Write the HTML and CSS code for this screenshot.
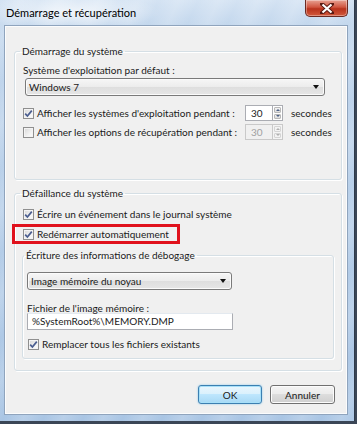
FILE: index.html
```html
<!DOCTYPE html>
<html lang="fr">
<head>
    <meta charset="UTF-8">
    <title>Démarrage et récupération</title>
    <link rel="stylesheet" href="styles.css">
</head>
<body>
    <div class="window">
        <div class="titlebar">
            <span class="title">Démarrage et récupération</span>
            <span class="close">
                <svg width="14" height="11" viewBox="0 0 14 11">
                    <path d="M2 1 L12 10 M12 1 L2 10" stroke="#5a1a12" stroke-width="4" stroke-linecap="square"/>
                    <path d="M2.5 1.5 L11.5 9.5 M11.5 1.5 L2.5 9.5" stroke="#fff" stroke-width="2.2"/>
                </svg>
            </span>
        </div>

        <div class="client">
            <fieldset class="group group-startup">
                <legend>Démarrage du système</legend>
                <div class="label">Système d'exploitation par défaut :</div>
                <div class="combo combo-os">
                    <span>Windows 7</span>
                    <i class="arrow"></i>
                </div>
                <div class="row row-first">
                    <span class="check">
                        <svg width="9" height="9" viewBox="0 0 9 9"><path d="M1.2 4.6 L3.4 7 L7.8 1.6" fill="none" stroke="#4a5d8f" stroke-width="1.7"/></svg>
                    </span>
                    <span class="row-text">Afficher les systèmes d'exploitation pendant :</span>
                    <div class="spin">
                        <span class="spin-value">30</span>
                        <span class="spin-btns"><i class="up"></i><i class="down"></i></span>
                    </div>
                    <span class="unit">secondes</span>
                </div>
                <div class="row">
                    <span class="check"></span>
                    <span class="row-text">Afficher les options de récupération pendant :</span>
                    <div class="spin spin-disabled">
                        <span class="spin-value">30</span>
                        <span class="spin-btns"><i class="up"></i><i class="down"></i></span>
                    </div>
                    <span class="unit">secondes</span>
                </div>
            </fieldset>

            <fieldset class="group group-failure">
                <legend>Défaillance du système</legend>
                <div class="row">
                    <span class="check">
                        <svg width="9" height="9" viewBox="0 0 9 9"><path d="M1.2 4.6 L3.4 7 L7.8 1.6" fill="none" stroke="#4a5d8f" stroke-width="1.7"/></svg>
                    </span>
                    <span>Écrire un événement dans le journal système</span>
                </div>
                <div class="row row-restart">
                    <div class="highlight">
                        <span class="check">
                            <svg width="9" height="9" viewBox="0 0 9 9"><path d="M1.2 4.6 L3.4 7 L7.8 1.6" fill="none" stroke="#4a5d8f" stroke-width="1.7"/></svg>
                        </span>
                        <span>Redémarrer automatiquement</span>
                    </div>
                </div>

                <fieldset class="group group-debug">
                    <legend>Écriture des informations de débogage</legend>
                    <div class="combo combo-dump">
                        <span>Image mémoire du noyau</span>
                        <i class="arrow"></i>
                    </div>
                    <div class="label label-file">Fichier de l'image mémoire :</div>
                    <div class="textbox">%SystemRoot%\MEMORY.DMP</div>
                    <div class="row row-replace">
                        <span class="check">
                            <svg width="9" height="9" viewBox="0 0 9 9"><path d="M1.2 4.6 L3.4 7 L7.8 1.6" fill="none" stroke="#4a5d8f" stroke-width="1.7"/></svg>
                        </span>
                        <span>Remplacer tous les fichiers existants</span>
                    </div>
                </fieldset>
            </fieldset>

            <div class="actions">
                <button class="btn btn-default">OK</button>
                <button class="btn">Annuler</button>
            </div>
        </div>
    </div>
</body>
</html>
```

FILE: styles.css
```css
body {
    margin: 0;
    width: 357px;
    height: 424px;
    overflow: hidden;
    background: #3b4656;
    font-family: 'Lato', sans-serif;
    font-size: 10px;
    color: #1a1a1a;
    white-space: nowrap;
}

.window {
    width: 355px;
    height: 421px;
    box-sizing: border-box;
    padding: 0 6px 0 4px;
    background:
        radial-gradient(ellipse 90px 18px at 70px 12px, rgba(255, 255, 255, 0.7), rgba(255, 255, 255, 0)),
        repeating-linear-gradient(115deg, rgba(255, 255, 255, 0) 0, rgba(255, 255, 255, 0.18) 18px, rgba(255, 255, 255, 0) 36px),
        linear-gradient(180deg, #d4e3f3 0, #c3d7ed 25px, #a9c5e4 100%);
    border-right: 1px solid #2e3a4a;
}

.titlebar {
    height: 25px;
    display: flex;
    justify-content: space-between;
    align-items: flex-start;
}

.title {
    margin: 5px 0 0 2px;
    font-size: 11px;
    line-height: 16px;
    color: #000;
}

.close {
    width: 43px;
    height: 17px;
    box-sizing: border-box;
    display: flex;
    justify-content: center;
    align-items: center;
    border: 1px solid #6b2a22;
    border-top: none;
    border-radius: 0 0 5px 5px;
    background: linear-gradient(180deg, #e8a293 0, #d0553f 45%, #b8321c 55%, #d25a3c 100%);
    box-shadow: inset 0 0 0 1px rgba(255, 255, 255, 0.35);
}

.client {
    height: 390px;
    box-sizing: border-box;
    border: 1px solid #8fa4bd;
    box-shadow: inset 0 0 0 1px #fbfcfd;
    background: #f0f0f0;
    padding: 0 5px 0 9px;
    display: flex;
    flex-direction: column;
}

/* group boxes */

.group {
    margin: 0;
    border: 1px solid #d5dfe5;
    border-radius: 3px;
    box-shadow: inset 1px 1px 0 #fff, 1px 1px 0 #fff;
    padding: 0 0 0 8px;
    min-width: 0;
}

.group legend {
    padding: 0 2px;
    margin-left: -3px;
    line-height: 15px;
}

.group-startup {
    margin-top: 18px;
    height: 136px;
    box-sizing: border-box;
    padding-top: 4px;
}

.group-failure {
    margin-top: 6px;
    height: 185px;
    box-sizing: border-box;
    padding-top: 5px;
    padding-right: 7px;
}

.group-debug {
    margin: 6px 0 0 -1px;
    height: 111px;
    box-sizing: border-box;
    padding: 9px 0 0 4px;
}

.label {
    line-height: 15px;
}

.label-file {
    margin-top: 12px;
    line-height: 12px;
}

/* combo boxes */

.combo {
    box-sizing: border-box;
    height: 18px;
    display: flex;
    align-items: center;
    justify-content: space-between;
    padding: 0 5px 0 3px;
    border: 1px solid #7a7a7a;
    border-radius: 3px;
    background: linear-gradient(180deg, #f6f6f6 0, #ececec 50%, #dedede 51%, #e6e6e6 100%);
    box-shadow: inset 0 0 0 1px #fbfbfb;
}

.combo-os {
    width: 300px;
    margin-left: 2px;
}

.combo-dump {
    width: 205px;
}

.arrow {
    width: 0;
    height: 0;
    border-left: 3.5px solid transparent;
    border-right: 3.5px solid transparent;
    border-top: 4px solid #111;
}

/* checkbox rows */

.row {
    display: flex;
    align-items: center;
    height: 16px;
}

.row-first {
    margin-top: 9px;
}

.row + .row {
    margin-top: 3px;
}

.group-failure .row + .row {
    margin-top: 4px;
}

.check {
    flex: none;
    width: 11px;
    height: 11px;
    box-sizing: border-box;
    margin-right: 3px;
    display: flex;
    align-items: center;
    justify-content: center;
    border: 1px solid #8f8f8f;
    background: linear-gradient(135deg, #d6d6d6 0, #f2f2f2 60%, #fdfdfd 100%);
    box-shadow: inset 0 0 0 1px #f4f4f4;
}

.row-text {
    width: 207px;
}

.highlight {
    display: flex;
    align-items: center;
    margin: -4px 0 -4px -11px;
    padding: 1px 8px;
    border: 3px solid #e0111c;
}

/* spin boxes */

.spin {
    display: flex;
    height: 16px;
    margin-left: 1px;
}

.spin-value {
    width: 27px;
    box-sizing: border-box;
    padding-left: 5px;
    line-height: 14px;
    border: 1px solid #abadb3;
    border-right: none;
    background: #fff;
}

.spin-btns {
    width: 11px;
    display: flex;
    flex-direction: column;
    border: 1px solid #abadb3;
    box-sizing: border-box;
    background: #fff;
}

.spin-btns i {
    flex: 1;
    display: flex;
    align-items: center;
    justify-content: center;
    margin: 1px;
    background: linear-gradient(180deg, #f3f3f3, #dcdcdc);
    border: 1px solid #b8b8b8;
    border-radius: 1px;
}

.spin-btns i + i {
    margin-top: 0;
}

.spin-btns .up::after,
.spin-btns .down::after {
    content: "";
    border-left: 2px solid transparent;
    border-right: 2px solid transparent;
}

.spin-btns .up::after {
    border-bottom: 2px solid #4d6185;
}

.spin-btns .down::after {
    border-top: 2px solid #4d6185;
}

.spin-disabled .spin-value {
    color: #a0a0a0;
    border-color: #c9c9c9;
    background: #f0f0f0;
}

.spin-disabled .spin-btns {
    border-color: #c9c9c9;
    background: #f4f4f4;
}

.spin-disabled .spin-btns i {
    border-color: #d4d4d4;
    background: #f3f3f3;
}

.spin-disabled .up::after {
    border-bottom-color: #b0b0b0;
}

.spin-disabled .down::after {
    border-top-color: #b0b0b0;
}

.unit {
    margin-left: 8px;
}

/* text box */

.textbox {
    width: 206px;
    height: 17px;
    box-sizing: border-box;
    margin-top: -1px;
    padding-left: 4px;
    line-height: 15px;
    border: 1px solid #abadb3;
    border-top-color: #e3e9ef;
    background: #fff;
}

.row-replace {
    margin-top: 6px;
    padding-left: 1px;
}

/* buttons */

.actions {
    display: flex;
    justify-content: flex-end;
    gap: 8px;
    margin-top: 14px;
    padding-right: 7px;
}

.btn {
    width: 65px;
    height: 19px;
    padding: 0;
    font-family: 'Lato', sans-serif;
    font-size: 10px;
    color: #1a1a1a;
    border: 1px solid #707070;
    border-radius: 3px;
    background: linear-gradient(180deg, #f4f4f4 0, #ebebeb 49%, #dddddd 50%, #cfcfcf 100%);
    box-shadow: inset 0 0 0 1px #fcfcfc;
}

.btn-default {
    width: 64px;
    border-color: #3c7fb1;
    background: linear-gradient(180deg, #eaf6fd 0, #d9f0fc 49%, #bee6fd 50%, #a7d9f5 100%);
    box-shadow: inset 0 0 0 1px #a7e0f9, 0 0 2px #7fc4ec;
}
```
